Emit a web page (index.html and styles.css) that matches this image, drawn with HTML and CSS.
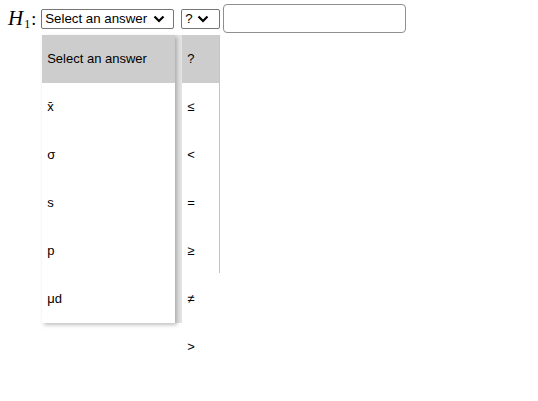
FILE: index.html
```html
<!DOCTYPE html>
<html lang="en">
<head>
    <meta charset="UTF-8" />
    <meta name="viewport" content="width=device-width, initial-scale=1">
    <title>Hypothesis</title>
    <link rel="stylesheet" href="styles.css">
</head>
<body>
    <div class="answer-row">
        <span class="math-label"><i>H</i><sub>1</sub>:</span>

        <div class="pick pick-param">
            <div class="pick-box">
                <span>Select an answer</span>
                <svg class="chevron" viewBox="0 0 12 8" width="12" height="8"><path d="M1.5 1.5 L6 6 L10.5 1.5" fill="none" stroke="#000" stroke-width="2.2"/></svg>
            </div>
            <div class="pick-menu menu-param">
                <div class="pick-option current">Select an answer</div>
                <div class="pick-option">x̄</div>
                <div class="pick-option">σ</div>
                <div class="pick-option">s</div>
                <div class="pick-option">p</div>
                <div class="pick-option">μd</div>
            </div>
        </div>

        <div class="pick pick-op">
            <div class="pick-box">
                <span>?</span>
                <svg class="chevron" viewBox="0 0 12 8" width="12" height="8"><path d="M1.5 1.5 L6 6 L10.5 1.5" fill="none" stroke="#000" stroke-width="2.2"/></svg>
            </div>
            <div class="pick-menu menu-op">
                <div class="pick-option current">?</div>
                <div class="pick-option">≤</div>
                <div class="pick-option">&lt;</div>
                <div class="pick-option">=</div>
                <div class="pick-option">≥</div>
                <div class="pick-option">≠</div>
                <div class="pick-option">&gt;</div>
            </div>
        </div>

        <input class="value-input" type="text">
    </div>
</body>
</html>
```

FILE: styles.css
```css
* { box-sizing: border-box; }
html, body {
    height: 100%;
}
body {
    margin: 0;
    padding: 4px 8px;
    min-height: 401px;
    background: #fff;
    color: #000;
    font-family: 'Liberation Sans', Arial, sans-serif;
}
.answer-row {
    display: flex;
    align-items: center;
}
.math-label {
    font-family: 'Liberation Serif', 'Times New Roman', serif;
    font-size: 18px;
    margin-right: 5px;
    white-space: nowrap;
}
.math-label i {
    font-size: 21px;
    letter-spacing: 1px;
}
.math-label sub {
    font-size: 12px;
    vertical-align: -3px;
    margin-right: 1px;
}
.pick {
    position: relative;
}
.pick-box {
    display: flex;
    align-items: center;
    height: 20px;
    border: 1px solid #767676;
    border-radius: 2px;
    padding: 0 4px 0 3px;
    font-size: 13.3px;
    background: #fff;
}
.pick-param .pick-box {
    width: 133px;
}
.pick-param .chevron {
    margin-left: 6px;
}
.pick-op {
    margin-left: 7px;
}
.pick-op .pick-box {
    width: 39px;
}
.pick-op .chevron {
    margin-left: 4px;
}
.chevron {
    display: block;
}
.value-input {
    margin-left: 3px;
    width: 183px;
    height: 29px;
    border: 1px solid #8f8f8f;
    border-radius: 4px;
}

/* opened dropdown lists */
.pick-menu {
    position: absolute;
    top: 26px;
    left: 1px;
    background: #fff;
    z-index: 10;
}
.pick-option {
    display: block;
    height: 48px;
    line-height: 48px;
    padding-left: 5px;
    font-size: 13px;
    white-space: nowrap;
}
.pick-option.current {
    background: #cdcdcd;
}
.menu-param {
    width: 133px;
    box-shadow: 2px 2px 4px rgba(0, 0, 0, 0.25), 7px 0 0 #e3e3e3;
}
.menu-op {
    width: 38px;
    height: 238px;
    border-right: 1px solid #c4c4c4;
}
```
